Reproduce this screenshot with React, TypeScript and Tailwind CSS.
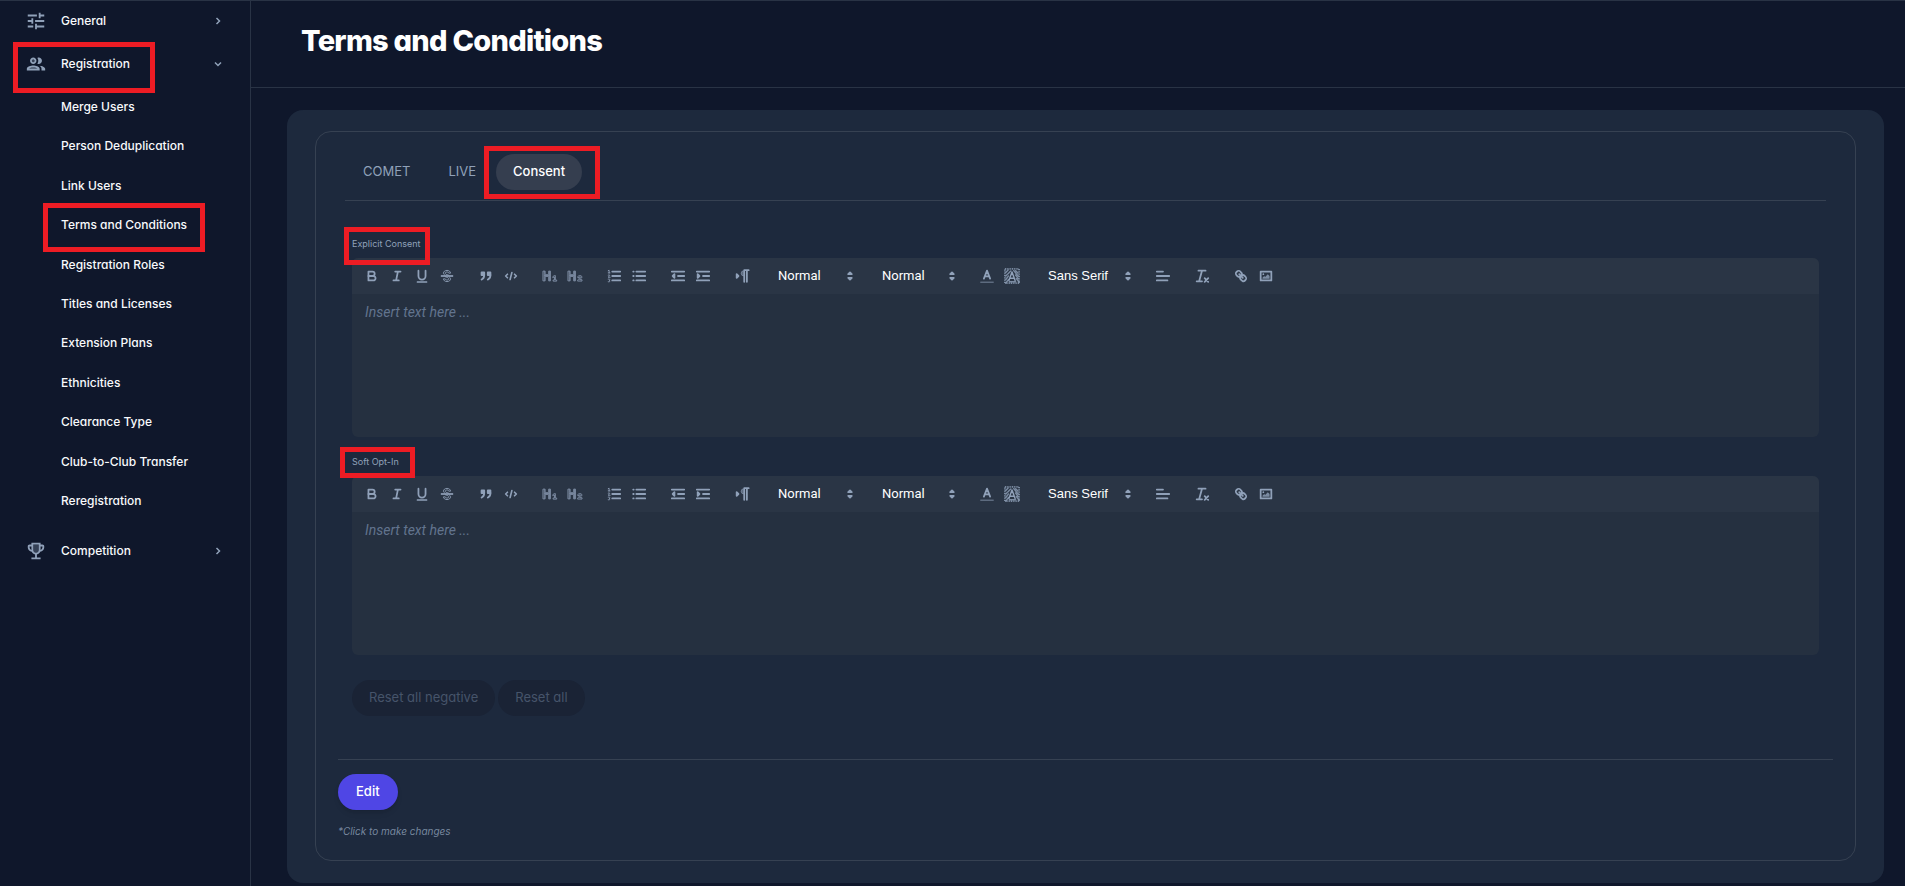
import type { ReactNode } from "react";

const subItems = [
  "Merge Users",
  "Person Deduplication",
  "Link Users",
  "Terms and Conditions",
  "Registration Roles",
  "Titles and Licenses",
  "Extension Plans",
  "Ethnicities",
  "Clearance Type",
  "Club-to-Club Transfer",
  "Reregistration",
];

function Highlight({ className }: { className: string }) {
  return (
    <span
      aria-hidden="true"
      className={`pointer-events-none absolute z-10 border-5 border-[#ed1c24] ${className}`}
    />
  );
}

function TuneIcon() {
  return (
    <svg viewBox="0 0 24 24" className="size-[22px]" fill="currentColor">
      <path d="M3 17v2h6v-2H3zM3 5v2h10V5H3zm10 16v-2h8v-2h-8v-2h-2v6h2zM7 9v2H3v2h4v2h2V9H7zm14 4v-2H11v2h10zm-6-4h2V7h4V5h-4V3h-2v6z" />
    </svg>
  );
}

function PeopleIcon() {
  return (
    <svg viewBox="0 0 24 24" className="size-[22px]" fill="currentColor">
      <g opacity="0.3">
        <circle cx="9" cy="8.5" r="1.5" />
        <path d="M4.340 17h9.320c-.84-.58-2.870-1.250-4.660-1.250s-3.820.67-4.660 1.250z" />
      </g>
      <path d="M9 12c1.930 0 3.500-1.570 3.500-3.500S10.930 5 9 5 5.500 6.570 5.500 8.500 7.070 12 9 12zm0-5c.83 0 1.500.67 1.500 1.500S9.830 10 9 10s-1.500-.67-1.500-1.500S8.170 7 9 7zm0 6.750c-2.340 0-7 1.170-7 3.500V19h14v-1.750c0-2.330-4.660-3.500-7-3.500zM4.340 17c.84-.58 2.870-1.250 4.660-1.250s3.820.67 4.660 1.250H4.340zm11.700-3.190c1.160.84 1.960 1.960 1.960 3.440V19h4v-1.750c0-2.020-3.500-3.170-5.960-3.440zM15 12c1.930 0 3.500-1.570 3.500-3.500S16.930 5 15 5c-.54 0-1.040.13-1.500.35.63.89 1 1.980 1 3.150s-.37 2.260-1 3.150c.46.22.96.35 1.500.35z" />
    </svg>
  );
}

function TrophyIcon() {
  return (
    <svg viewBox="0 0 24 24" className="size-[22px]" fill="currentColor">
      <path opacity="0.3" d="M12 14c-1.650 0-3-1.350-3-3V5h6v6c0 1.650-1.350 3-3 3z" />
      <path d="M19 5h-2V3H7v2H5c-1.100 0-2 .9-2 2v1c0 2.550 1.920 4.630 4.390 4.940.63 1.500 1.980 2.630 3.610 2.960V19H7v2h10v-2h-4v-3.100c1.630-.33 2.980-1.460 3.610-2.960C19.080 12.630 21 10.550 21 8V7c0-1.100-.9-2-2-2zM5 8V7h2v3.820C5.840 10.400 5 9.300 5 8zm7 6c-1.650 0-3-1.350-3-3V5h6v6c0 1.650-1.350 3-3 3zm7-6c0 1.300-.84 2.400-2 2.820V7h2v1z" />
    </svg>
  );
}

function Chevron({ open = false }: { open?: boolean }) {
  return (
    <svg
      viewBox="0 0 12 12"
      className="ml-auto size-3 text-slate-400"
      fill="none"
      stroke="currentColor"
      strokeWidth="1.5"
    >
      <path d={open ? "M3 4.500 6 7.500 9 4.500" : "M4.500 3 7.500 6 4.500 9"} />
    </svg>
  );
}

function NavRow({ icon, label, open }: { icon: ReactNode; label: string; open?: boolean }) {
  return (
    <button
      type="button"
      aria-expanded={!!open}
      className="flex h-[43px] w-full items-center pr-[26px] pb-[3px] pl-[25px] text-left text-slate-400"
    >
      {icon}
      <span className="ml-3.5 text-slate-50">{label}</span>
      <Chevron open={open} />
    </button>
  );
}

function Sidebar() {
  return (
    <nav className="w-[251px] shrink-0 border-r border-[#293345] text-[12px] font-medium text-slate-50">
      <NavRow icon={<TuneIcon />} label="General" />
      <div className="relative">
        <NavRow icon={<PeopleIcon />} label="Registration" open />
        <Highlight className="top-[-2px] left-[13px] h-[51px] w-[142px]" />
      </div>
      <ul className="grid h-[434px] auto-rows-fr">
        {subItems.map((item) => (
          <li key={item} className="relative flex items-center pl-[61px]">
            <a href="#">{item}</a>
            {item === "Terms and Conditions" && (
              <Highlight className="top-[-2px] left-[43px] h-[49px] w-[162px]" />
            )}
          </li>
        ))}
      </ul>
      <div className="mt-2.5">
        <NavRow icon={<TrophyIcon />} label="Competition" />
      </div>
    </nav>
  );
}

const icons: Record<string, ReactNode> = {
  Bold: (
    <>
      <path d="M5,4H9.500A2.500,2.500,0,0,1,12,6.500v0A2.500,2.500,0,0,1,9.500,9H5V4Z" />
      <path d="M5,9h5.500A2.500,2.500,0,0,1,13,11.500v0A2.500,2.500,0,0,1,10.500,14H5V9Z" />
    </>
  ),
  Italic: <path d="M7,4H13M5,14H11M8,14L10,4" />,
  Underline: (
    <>
      <path d="M5,3V9a4.012,4.012,0,0,0,4,4H9a4.012,4.012,0,0,0,4-4V3" />
      <rect fill="currentColor" stroke="none" height="1.5" rx="0.5" width="12" x="3" y="15" />
    </>
  ),
  Strike: (
    <g strokeWidth="1">
      <path d="M15.500,8.500H2.500M15.500,9.500H2.500" />
      <path d="M6.500,8C5.600,7.500 5,6.700 5,5.800 5,4.100 6.700,2.700 9,2.700S13,4.100 13,5.800H11C11,5 10.200,4.500 9,4.500S7,5 7,5.800 7.800,7.300 9,7.500l2,.7" />
      <path d="M11.500,10C12.400,10.500 13,11.300 13,12.200 13,13.900 11.300,15.300 9,15.300S5,13.900 5,12.200H7C7,13 7.800,13.500 9,13.500S11,13 11,12.200 10.200,10.700 9,10.500L7,9.800" />
    </g>
  ),
  Blockquote: (
    <g fill="currentColor">
      <rect height="3" width="3" x="4" y="5" />
      <rect height="3" width="3" x="11" y="5" />
      <path d="M7,8c0,4.031-3,5-3,5M14,8c0,4.031-3,5-3,5" fill="none" />
    </g>
  ),
  "Code block": <path d="M5,7 3,9 5,11M13,7 15,9 13,11M10,5 8,13" strokeWidth="1.8" />,
  "Heading 1": (
    <g strokeWidth="1.1" opacity="0.8">
      <path d="M1.500,3.500h2v4h4v-4h2v11h-2v-5h-4v5h-2ZM2.500,4V14M8.500,4V14M3,8.500H8" />
      <path d="M12.500,9.500l1.500-1h1v5h1.500v1.300h-4v-1.300H14V10l-1.500.6Z" />
    </g>
  ),
  "Heading 2": (
    <g strokeWidth="1.1" opacity="0.8">
      <path d="M1.500,3.500h2v4h4v-4h2v11h-2v-5h-4v5h-2ZM2.500,4V14M8.500,4V14M3,8.500H8" />
      <path d="M12,10.200c0-2.400 4.800-2.400 4.800 0 0 1.600-2.300 2-2.800 3h2.900v1.500h-5c0-2.800 3.300-3 3.300-4.500 0-.8-1.600-.8-1.600.3Z" />
    </g>
  ),
  "Ordered list": (
    <>
      <path d="M7,4H16M7,9H16M7,14H16" />
      <path
        d="M2.500,5.500H4.500M3.500,5.500V2.500L2.500,3M2.500,8C4.500,7 5,8.500 2.500,10.400H4.700M2.500,12.500C5,12 5,14 3.500,14 5,14 5,16 2.500,15.500"
        strokeWidth="1"
      />
    </>
  ),
  "Bullet list": <path d="M6,4H16M6,9H16M6,14H16M2.500,4H3M2.500,9H3M2.500,14H3" />,
  Outdent: (
    <>
      <path d="M2,14H16M2,4H16M9,9H16" />
      <path d="M5,7V11L3,9Z" fill="currentColor" />
    </>
  ),
  Indent: (
    <>
      <path d="M2,14H16M2,4H16M9,9H16" />
      <path d="M3,7V11L5,9Z" fill="currentColor" />
    </>
  ),
  "Text direction": (
    <>
      <path d="M3,7V11L5,9Z" fill="currentColor" />
      <path d="M11.500,2.500H16.500M11.500,4V15.500M14.500,3V15.500" strokeWidth="2" />
      <path
        d="M11,9A3,3 0 0,1 11,3"
        fill="currentColor"
        fillOpacity="0.5"
        strokeOpacity="0.6"
        strokeWidth="1"
      />
    </>
  ),
  "Text color": (
    <>
      <path d="M2,16H16" strokeWidth="1.5" opacity="0.5" />
      <path d="M5.500,12 9,3 12.500,12M6.500,9.500H11.500" />
    </>
  ),
  "Background color": (
    <>
      <rect
        x="1"
        y="1"
        width="16"
        height="16"
        strokeDasharray="1.2 0.8"
        strokeLinecap="butt"
        opacity="0.8"
      />
      <path
        d="M2,5 5,2M2,9 8,3M2,13 5,9M2,17 5,13M13,3 16,6M11,3 16,9M13,8 16,12M14,12 17,16M6,15.500H13"
        strokeWidth="1.6"
        strokeDasharray="1.5 0.7"
        opacity="0.8"
      />
      <path d="M5.500,14 9,4.500 12.500,14M6.500,11.500H11.500" strokeWidth="1.6" />
    </>
  ),
  Align: <path d="M2,9H16M2,14H14M2,4H9" />,
  "Clear formatting": (
    <>
      <path d="M5,3H13M6,14 9,3M3,15H9" />
      <path d="M12,11.500 16,15.500M16,11.500 12,15.500" />
    </>
  ),
  Link: (
    <>
      <path d="M7,7 11,11" />
      <path d="M8.900,4.577a3.476,3.476,0,0,1,.36,4.679A3.476,3.476,0,0,1,4.577,8.900C3.185,7.500,2.035,6.400,4.217,4.217S7.500,3.185,8.900,4.577Z" />
      <path d="M13.423,9.100a3.476,3.476,0,0,0-4.679-.36,3.476,3.476,0,0,0,.36,4.679c1.392,1.392,2.500,2.542,4.679.36S14.815,10.500,13.423,9.100Z" />
    </>
  ),
  Image: (
    <>
      <rect height="10" width="12" x="3" y="4" />
      <circle cx="6" cy="7" r="1" fill="currentColor" stroke="none" />
      <path
        d="M5,12V11L7,9 8,10 11,7 13,9V12Z"
        fill="currentColor"
        fillOpacity="0.8"
        stroke="none"
      />
    </>
  ),
};

function Tool({ name }: { name: string }) {
  return (
    <button
      type="button"
      aria-label={name}
      className="flex h-[22px] w-[25px] items-center justify-center text-slate-400"
    >
      <svg
        viewBox="0 0 18 18"
        className="size-4"
        fill="none"
        stroke="currentColor"
        strokeWidth="2"
        strokeLinecap="round"
        strokeLinejoin="round"
      >
        {icons[name]}
      </svg>
    </button>
  );
}

function Tools({ names }: { names: string[] }) {
  return (
    <div className="flex">
      {names.map((name) => (
        <Tool key={name} name={name} />
      ))}
    </div>
  );
}

function Picker({ label, value, className }: { label: string; value: string; className: string }) {
  return (
    <div className={`relative flex items-center ${className}`}>
      <select
        aria-label={label}
        defaultValue={value}
        className="h-[22px] w-full appearance-none bg-transparent pl-2.5 text-[13px] leading-[22px] text-white outline-none"
      >
        <option>{value}</option>
      </select>
      <svg
        viewBox="0 0 18 18"
        className="pointer-events-none absolute right-0 size-4 text-slate-400"
        fill="currentColor"
        stroke="currentColor"
        strokeWidth="2"
        strokeLinejoin="round"
      >
        <path d="M7,11 9,13 11,11ZM7,7 9,5 11,7Z" />
      </svg>
    </div>
  );
}

function Editor({ id, label, mark }: { id: string; label: string; mark: string }) {
  return (
    <section>
      <div className="relative mb-2 flex">
        <label htmlFor={id} className="text-[9px] leading-3 text-slate-400">
          {label}
        </label>
        <Highlight className={mark} />
      </div>
      <div className="overflow-hidden rounded-md bg-[#253040]">
        <div className="flex h-9 items-center gap-3.5 bg-[#2a3545] pl-[7px] font-['Roboto',sans-serif]">
          <Tools names={["Bold", "Italic", "Underline", "Strike"]} />
          <Tools names={["Blockquote", "Code block"]} />
          <Tools names={["Heading 1", "Heading 2"]} />
          <Tools names={["Ordered list", "Bullet list"]} />
          <Tools names={["Outdent", "Indent"]} />
          <Tools names={["Text direction"]} />
          <Picker label="Size" value="Normal" className="w-[90px]" />
          <Picker label="Heading" value="Normal" className="w-[88px]" />
          <Tools names={["Text color", "Background color"]} />
          <Picker
            label="Font"
            value="Sans Serif"
            className="w-[98px] font-['Liberation_Sans',Arial,sans-serif]"
          />
          <Tools names={["Align"]} />
          <Tools names={["Clear formatting"]} />
          <Tools names={["Link", "Image"]} />
        </div>
        <textarea
          id={id}
          placeholder="Insert text here ..."
          className="block h-[143px] w-full resize-none px-[13px] py-[9px] font-['Roboto',sans-serif] text-[14px] leading-[18px] text-white outline-none placeholder:text-slate-500 placeholder:italic"
        />
      </div>
    </section>
  );
}

export default function App() {
  return (
    <div className="flex min-h-screen border-t border-[#293345] bg-slate-900 font-['Inter',sans-serif] text-white [font-feature-settings:'cv11']">
      <Sidebar />
      <div className="min-w-0 flex-1">
        <header className="border-b border-[#293345] px-[50px] pt-[22px] pb-7">
          <h1 className="text-[29px] leading-9 font-extrabold tracking-tight">
            Terms and Conditions
          </h1>
        </header>
        <main className="pt-[22px] pr-[21px] pb-[3px] pl-9">
          <div className="rounded-2xl bg-slate-800 px-7 pt-[21px] pb-[22px]">
            <div className="rounded-2xl border border-[#364152] pt-[22px] pb-[21px]">
              <div
                role="tablist"
                className="mx-[29px] flex gap-0.5 border-b border-[#364152] pb-2.5 text-[13px] text-slate-400"
              >
                <button type="button" role="tab" className="h-9 rounded-full px-[18px]">
                  COMET
                </button>
                <button type="button" role="tab" className="h-9 rounded-full px-[18px]">
                  LIVE
                </button>
                <div className="relative">
                  <button
                    type="button"
                    role="tab"
                    aria-selected="true"
                    className="h-9 rounded-full bg-[#353e4f] px-[17px] font-medium text-white"
                  >
                    Consent
                  </button>
                  <Highlight className="top-[-8px] left-[-12px] h-[53px] w-[116px]" />
                </div>
              </div>
              <div className="mx-9 mt-[37px] flex flex-col gap-[19px]">
                <Editor
                  id="explicit-consent"
                  label="Explicit Consent"
                  mark="top-[-11px] left-[-8px] h-[38px] w-[86px]"
                />
                <Editor
                  id="soft-opt-in"
                  label="Soft Opt-In"
                  mark="top-[-9px] left-[-12px] h-[31px] w-[75px]"
                />
              </div>
              <div className="mx-9 mt-[25px] flex gap-[3px] text-[13px] text-[#46546a]">
                <button type="button" disabled className="h-9 rounded-full bg-[#1a2335] px-[17px]">
                  Reset all negative
                </button>
                <button type="button" disabled className="h-9 rounded-full bg-[#1a2335] px-[17px]">
                  Reset all
                </button>
              </div>
              <div className="mx-[22px] mt-[43px] border-t border-[#364152] pt-3.5">
                <button
                  type="button"
                  className="block h-9 rounded-full bg-[#4f46e5] px-[18px] text-[13px] font-medium shadow-md"
                >
                  Edit
                </button>
                <p className="mt-[13px] text-[10px] leading-4 text-slate-400/80 italic">
                  *Click to make changes
                </p>
              </div>
            </div>
          </div>
        </main>
      </div>
    </div>
  );
}
